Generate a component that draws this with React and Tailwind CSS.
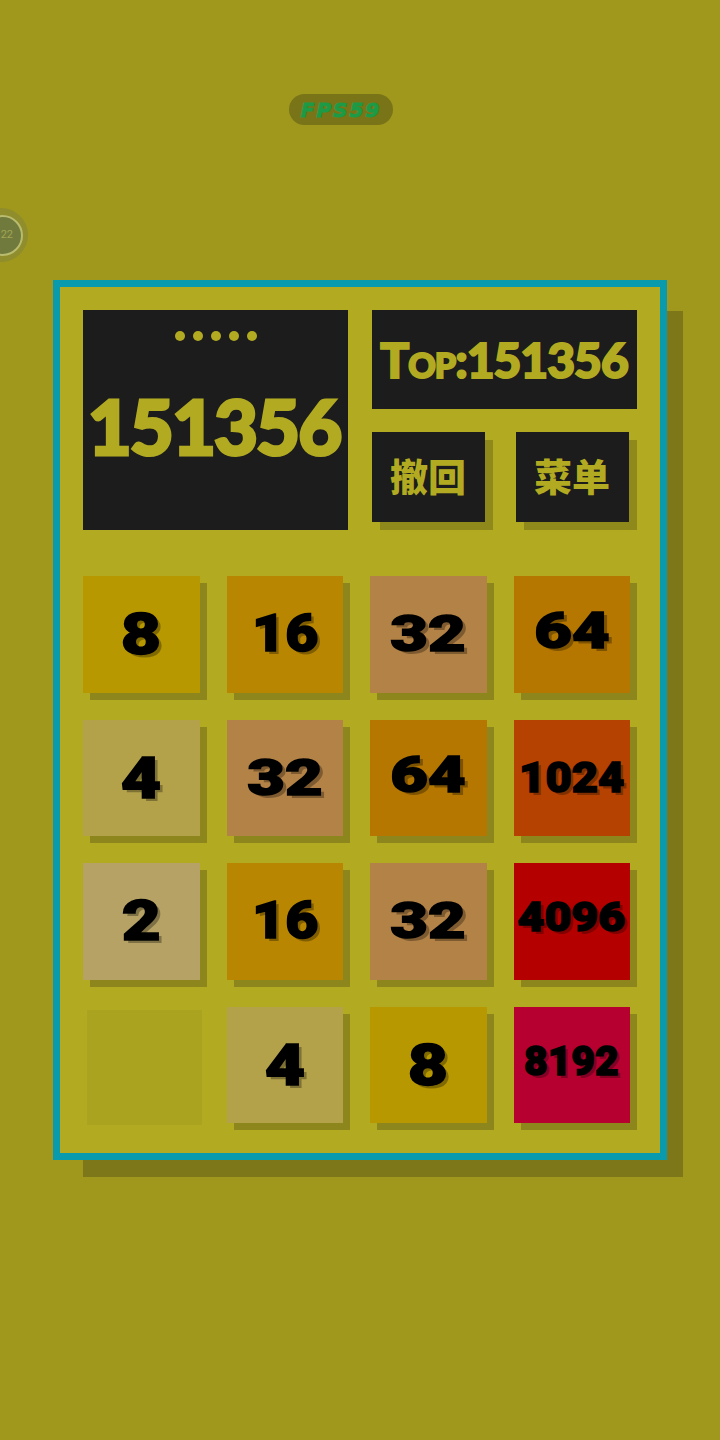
const tiles = [
  { n: '8', bg: 'bg-[#b89800]', t: 'text-[58px] scale-x-[1.2]' },
  { n: '16', bg: 'bg-[#b88600]', t: 'text-[52px] scale-x-[1.1]' },
  { n: '32', bg: 'bg-[#b38246]', t: 'text-[50px] scale-x-[1.3]' },
  { n: '64', bg: 'bg-[#b57700]', t: 'text-[50px] scale-x-[1.3] -translate-y-[3px]' },
  { n: '4', bg: 'bg-[#b3a24a]', t: 'text-[58px] scale-x-[1.2]' },
  { n: '32', bg: 'bg-[#b38246]', t: 'text-[50px] scale-x-[1.3]' },
  { n: '64', bg: 'bg-[#b57700]', t: 'text-[50px] scale-x-[1.3] -translate-y-[3px]' },
  { n: '1024', bg: 'bg-[#b54200]', t: 'text-[42px] scale-x-[1.08]' },
  { n: '2', bg: 'bg-[#b5a264]', t: 'text-[56px] scale-x-[1.2]' },
  { n: '16', bg: 'bg-[#b88600]', t: 'text-[52px] scale-x-[1.1]' },
  { n: '32', bg: 'bg-[#b38246]', t: 'text-[50px] scale-x-[1.3]' },
  { n: '4096', bg: 'bg-[#b50000]', t: 'text-[40px] scale-x-[1.16] -translate-y-[3px]' },
  null,
  { n: '4', bg: 'bg-[#b3a24a]', t: 'text-[58px] scale-x-[1.2]' },
  { n: '8', bg: 'bg-[#b89800]', t: 'text-[58px] scale-x-[1.2]' },
  { n: '8192', bg: 'bg-[#b50030]', t: 'text-[40px] scale-x-[1.02] -translate-y-[3px]' },
];

function Tile({ tile }) {
  if (!tile) {
    return <div className="w-[115px] h-[115px] mt-[3px] ml-[4px] bg-[#aaa320]" />;
  }
  return (
    <div className={`w-[116.5px] h-[116.5px] flex items-center justify-center shadow-[7px_7px_0_#8c861c] ${tile.bg}`}>
      <span
        className={`inline-block font-['Roboto',sans-serif] font-black leading-none text-black [-webkit-text-stroke:1.5px_#000] [text-shadow:3px_3px_0_rgba(0,0,0,0.3)] ${tile.t}`}
      >
        {tile.n}
      </span>
    </div>
  );
}

function ActionButton({ label }) {
  return (
    <button className="w-[113px] h-[90px] pb-[4px] flex items-center justify-center bg-[#1c1c1c] shadow-[8px_8px_0_#8f891b] font-['Noto_Sans_CJK_SC',sans-serif] font-black text-[38px] leading-none text-[#b2ab22]">
      {label}
    </button>
  );
}

export default function App() {
  return (
    <div className="relative w-[720px] h-[1440px] overflow-hidden bg-[#9f981d] pt-[94px]">
      <div className="ml-[289px] w-[104px] h-[31px] rounded-full bg-[#7a7418] flex items-center justify-center font-['DejaVu_Sans',sans-serif] font-bold italic text-[20px] tracking-[2px] text-[#1d9a45] leading-none [-webkit-text-stroke:1px_#1d9a45]">
        FPS59
      </div>

      <div className="absolute left-[-26px] top-[208px] w-[54px] h-[54px] rounded-full bg-[#8f8d2c] flex items-center justify-center">
        <div className="w-[41px] h-[41px] ml-[3px] rounded-full border-[2px] border-[#b9bb6e] bg-[#6f7a3c] flex items-center justify-end pr-[8px] font-['Roboto',sans-serif] text-[11px] text-[#a3a552]">
          22
        </div>
      </div>

      <div className="mt-[155px] ml-[53px] w-[614px] h-[880px] border-[7px] border-[#0a9aae] bg-[#b2ab22] shadow-[23px_24px_0_-7px_#7d7719] pl-[23px] pt-[23px]">
        <div className="flex gap-[23.5px]">
          <div className="w-[265px] h-[220px] bg-[#1c1c1c] flex flex-col items-center pt-[21px]">
            <div className="flex gap-[8px]">
              {[0, 1, 2, 3, 4].map((i) => (
                <span key={i} className="w-[10px] h-[10px] rounded-full bg-[#b2ab22]" />
              ))}
            </div>
            <div className="mt-[47px] pr-[3px] font-['Lato',sans-serif] font-black text-[76px] leading-none tracking-[-2px] text-[#b2ab22] [-webkit-text-stroke:3px_#b2ab22]">
              151356
            </div>
          </div>

          <div className="w-[265px]">
            <div className="h-[99px] bg-[#1c1c1c] flex items-center justify-center font-['Lato',sans-serif] font-black text-[48px] leading-none tracking-[-1px] [font-variant:small-caps] text-[#b2ab22] [-webkit-text-stroke:2px_#b2ab22]">
              Top:151356
            </div>
            <div className="mt-[23px] flex gap-[31px]">
              <ActionButton label="撤回" />
              <ActionButton label="菜单" />
            </div>
          </div>
        </div>

        <div className="mt-[46px] grid grid-cols-[repeat(4,116.5px)] auto-rows-[116.5px] gap-[27px]">
          {tiles.map((tile, i) => (
            <Tile key={i} tile={tile} />
          ))}
        </div>
      </div>
    </div>
  );
}
